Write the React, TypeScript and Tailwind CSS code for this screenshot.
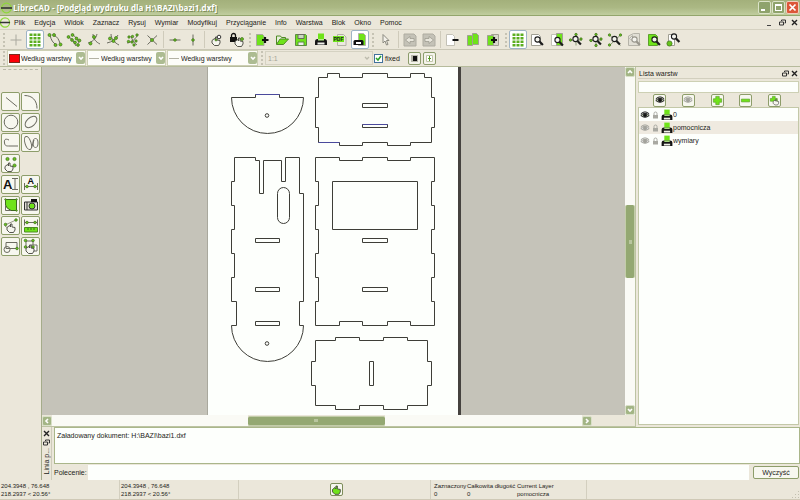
import type {ReactNode} from "react";

type Layer = {name: string; visible: boolean};

const MENUS = ["Plik", "Edycja", "Widok", "Zaznacz", "Rysuj", "Wymiar", "Modyfikuj", "Przyciąganie", "Info", "Warstwa", "Blok", "Okno", "Pomoc"];

const LAYERS: Layer[] = [
  {name: "0", visible: true},
  {name: "pomocnicza", visible: false},
  {name: "wymiary", visible: false},
];

function Icon({children, size = 16}: {children: ReactNode; size?: number}) {
  return (
    <svg width={size} height={size} viewBox="0 0 16 16" fill="none" stroke="#6b6b60" strokeWidth="1" className="shrink-0">
      {children}
    </svg>
  );
}

function Dots({at, r = 1.5}: {at: [number, number][]; r?: number}) {
  return (
    <g fill="#67c41c" stroke="#3d6b1c" strokeWidth="0.7">
      {at.map(([x, y]) => (
        <circle key={`${x}-${y}`} cx={x} cy={y} r={r} />
      ))}
    </g>
  );
}

function Lens({x, y, color = "#1c1c1c"}: {x: number; y: number; color?: string}) {
  return (
    <g stroke={color}>
      <circle cx={x} cy={y} r="2.6" fill="#f4f4ee" strokeWidth="1.1" />
      <path d={`M${x + 2} ${y + 2}l3.4 3.6`} strokeWidth="2.2" />
    </g>
  );
}

function Printer() {
  return (
    <g stroke="none">
      <path d="M5 1.5h6V8H5z" fill="#6fe31a" />
      <path d="M2 9.5Q2 7 4.500 7h7Q14 7 14 9.500V13H2z" fill="#151515" />
      <path d="M5 7h6v1.500H5z" fill="#b8f08c" />
      <path d="M4.500 10.500h7v2h-7z" fill="#f0f0ea" />
    </g>
  );
}

function Hand({x, y, fill = "#f5f5ee"}: {x: number; y: number; fill?: string}) {
  return (
    <path
      transform={`translate(${x} ${y})`}
      d="M0 2.5 2.5.5 3.5 2V-1H5V2l3 .5V5L6.5 7.5h-4L0 5z"
      fill={fill}
      stroke="#44443c"
      strokeWidth="0.9"
    />
  );
}

function GridIcon() {
  return (
    <Icon>
      {[1.5, 5, 8.5, 12].map((y) =>
        [2.5, 6.5, 10.5].map((x) => <path key={`${x}-${y}`} d={`M${x} ${y}h3v2.5h-3z`} fill="#5cae20" stroke="none" />)
      )}
    </Icon>
  );
}

function EyeIcon({on, size = 10}: {on: boolean; size?: number}) {
  return (
    <svg width={size} height={size} viewBox="0 0 10 10" fill="none" stroke={on ? "#222" : "#a3a39c"} className="shrink-0">
      <path d="M.8 5.5Q5 1 9.2 5.5 5 9 .8 5.5z" fill={on ? "#b8c4ac" : "#ddd"} />
      <circle cx="5" cy="5.2" r="1.5" fill={on ? "#111" : "#a3a39c"} />
      <path d="M.8 3.8Q5 0 9.2 3.8" />
    </svg>
  );
}

function ToolButton({label, active, children}: {label: string; active?: boolean; children: ReactNode}) {
  return (
    <button
      type="button"
      aria-label={label}
      className={
        active
          ? "flex h-[19px] w-[18px] shrink-0 items-center justify-center rounded-xs border border-[#9fb4c6] bg-white"
          : "flex h-[19px] w-[18px] shrink-0 items-center justify-center"
      }
    >
      {children}
    </button>
  );
}

function Handle() {
  return (
    <div className="flex w-[7px] shrink-0 justify-center">
      <div className="h-[14px] border-l-2 border-dotted border-[#c6c3b4]" />
    </div>
  );
}

function Separator() {
  return (
    <div className="flex w-[5px] shrink-0 justify-center">
      <div className="h-[17px] w-px bg-[#cfcbbb]" />
    </div>
  );
}

function SnapTools() {
  return (
    <>
      <Handle />
      <div className="flex w-[154px] shrink-0 justify-between">
        <ToolButton label="Krzyżyk">
          <Icon><path d="M8 2.5v11M2.500 8h11" stroke="#a9a89e" /></Icon>
        </ToolButton>
        <ToolButton label="Siatka" active><GridIcon /></ToolButton>
        <ToolButton label="Końce">
          <Icon>
            <path d="M3 3c1 5 3 8 6 9.5M7 3.500c3.500 1 5 4.500 6 8" />
            <Dots at={[[2.5, 3], [7, 3], [8.5, 13], [13.5, 12.5]]} />
          </Icon>
        </ToolButton>
        <ToolButton label="Na elemencie">
          <Icon>
            <path d="M2 5c3 1 5 3 8 9M6 2c4 3 5 5 7 9" />
            <Dots at={[[2.5, 5], [6.5, 3], [6, 8], [9, 10.5], [10.5, 6.5], [13.5, 8.5], [12, 13]]} r={1.4} />
          </Icon>
        </ToolButton>
        <ToolButton label="Środek łuku">
          <Icon>
            <path d="M7 2c0 5 3 8 7 10M2 11c4-1 8-4 9-9" />
            <Dots at={[[8, 5], [4.5, 11.5]]} />
          </Icon>
        </ToolButton>
        <ToolButton label="Środek">
          <Icon>
            <path d="M6 2c0 5 4 9 8 11M2 11c5-1 9-4 11-8" />
            <Dots at={[[5, 6.5], [8.5, 9], [11, 6]]} />
          </Icon>
        </ToolButton>
        <ToolButton label="Odległość">
          <Icon>
            <path d="M2 11c5-1 9-4 11-9M6 4c1 4 3 7 6 9" />
            <Dots at={[[4, 5], [7.5, 4.5], [12, 3], [3.5, 9.5], [7, 10], [11, 9], [9, 13]]} r={1.2} />
          </Icon>
        </ToolButton>
        <ToolButton label="Przecięcie">
          <Icon>
            <path d="M3.5 3.5l9.500 9M13 3.500l-9.500 9" />
            <Dots at={[[8, 8]]} />
          </Icon>
        </ToolButton>
      </div>
      <Separator />
      <div className="flex w-[36px] shrink-0 justify-between">
        <ToolButton label="Poziomo"><Icon><path d="M2.5 8h11" /><Dots at={[[8, 8]]} r={1.3} /></Icon></ToolButton>
        <ToolButton label="Pionowo"><Icon><path d="M8 2.5v11" /><Dots at={[[8, 8]]} r={1.3} /></Icon></ToolButton>
      </div>
      <Separator />
      <div className="flex w-[39px] shrink-0 justify-between">
        <ToolButton label="Ustaw zero">
          <Icon><Hand x={4} y={6} /><circle cx="11" cy="5" r="1.8" fill="#fff" stroke="#333" /><Dots at={[[8, 8]]} r={1} /></Icon>
        </ToolButton>
        <ToolButton label="Zablokuj zero">
          <Icon>
            <path d="M1 5h7v5H1z" fill="#111" stroke="none" />
            <path d="M2.5 5V3.500a2 2 0 0 1 4 0V5" stroke="#111" strokeWidth="1.3" />
            <Hand x={6} y={7} /><Dots at={[[13, 7]]} />
          </Icon>
        </ToolButton>
      </div>
    </>
  );
}

function FileTools() {
  return (
    <>
      <Handle />
      <div className="flex w-[116px] shrink-0 justify-between">
        <ToolButton label="Nowy">
          <Icon>
            <path d="M2.5 2.500h6l1.500 1.500v9.500H2.500z" fill="#6fe31a" stroke="#a9a9a0" />
            <path d="M11 5v6M8 8h6.500" stroke="#111" strokeWidth="2.2" />
          </Icon>
        </ToolButton>
        <ToolButton label="Otwórz">
          <Icon>
            <path d="M2.5 12V4h4l1 1.500h4V7" stroke="#4f8a24" fill="#e8efdc" />
            <path d="M2.5 12.500 6 7h8.500l-5 5.500z" fill="#6fe31a" stroke="#4f8a24" />
          </Icon>
        </ToolButton>
        <ToolButton label="Zapisz">
          <Icon>
            <path d="M2.5 2.500h10l1 1v10h-11z" fill="#6fe31a" stroke="#5d8a42" />
            <path d="M5 2.500h6v4H5z" fill="#c9d8bf" />
            <path d="M5 10h6v3.500H5z" fill="#eee" stroke="#5d8a42" />
          </Icon>
        </ToolButton>
        <ToolButton label="Drukuj"><Icon><Printer /></Icon></ToolButton>
        <ToolButton label="Eksport PDF">
          <Icon>
            <path d="M5.5 2.500h6l2.500 2.500v8.500H5.500z" fill="#ece9df" stroke="#b3b1a6" />
            <path d="M1 4h11v6H1z" fill="#6fe31a" stroke="none" />
            <text x="1.500" y="9" fontSize="5" fontWeight="bold" fill="#222" stroke="none" fontFamily="Liberation Sans, sans-serif">PDF</text>
          </Icon>
        </ToolButton>
        <ToolButton label="Podgląd wydruku" active>
          <Icon>
            <path d="M6.5 1.500h5l2 2v10h-7z" fill="#6fe31a" stroke="#b3b1a6" />
            <path d="M1.5 9.500Q1.500 8 3 8h7q1.500 0 1.500 1.500V13h-10z" fill="#111" stroke="none" />
            <path d="M4 10h5v2H4z" fill="#fff" stroke="none" />
          </Icon>
        </ToolButton>
      </div>
      <Handle />
      <div className="flex w-[20px] shrink-0 justify-center">
        <ToolButton label="Wskaźnik">
          <Icon><path d="M5 2.500v8.500l2-2 1.500 4 1.500-.5-1.500-4H11z" fill="#f3f1ea" stroke="#8b8a80" /></Icon>
        </ToolButton>
      </div>
      <Separator />
      <div className="flex w-[37px] shrink-0 justify-between">
        <ToolButton label="Cofnij">
          <Icon>
            <path d="M2 2h10l2 2v10H2z" fill="#c4c2b7" stroke="#aeaca1" />
            <path d="M3.500 8 8 4.500v2h4v3H8v2z" fill="#e8e6dc" stroke="#97958a" strokeWidth="0.7" />
          </Icon>
        </ToolButton>
        <ToolButton label="Ponów">
          <Icon>
            <path d="M2 2h10l2 2v10H2z" fill="#c4c2b7" stroke="#aeaca1" />
            <path d="M12.500 8 8 4.500v2H4v3h4v2z" fill="#e8e6dc" stroke="#97958a" strokeWidth="0.7" />
          </Icon>
        </ToolButton>
      </div>
      <Separator />
      <div className="flex w-[59px] shrink-0 justify-between">
        <ToolButton label="Wytnij">
          <Icon><path d="M2.500 2.500h6l2 2v9h-8z" fill="#fff" stroke="#c3c1b6" /><path d="M8.500 8h6" stroke="#111" strokeWidth="2" /></Icon>
        </ToolButton>
        <ToolButton label="Kopiuj">
          <Icon><path d="M7.500 1.500h4l2 2v9h-6z" fill="#6fe31a" stroke="#a09f93" /><path d="M2.500 3.500h4l1 1v9h-5z" fill="#6fe31a" stroke="#a09f93" /></Icon>
        </ToolButton>
        <ToolButton label="Wklej">
          <Icon>
            <path d="M6.500 2.500h7v11h-7z" fill="#d9d7cc" stroke="#a09f93" />
            <path d="M2.500 3.500h6v10h-6z" fill="#6fe31a" stroke="#a09f93" />
            <path d="M9 5v6M6 8h6" stroke="#111" strokeWidth="2.2" />
          </Icon>
        </ToolButton>
      </div>
    </>
  );
}

function ZoomTools() {
  return (
    <>
      <Handle />
      <div className="flex w-[173px] shrink-0 justify-between">
        <ToolButton label="Pokaż siatkę" active><GridIcon /></ToolButton>
        <ToolButton label="Odśwież">
          <Icon><path d="M2.500 2.500h7l2 2v9h-9z" fill="#fff" stroke="#a09f93" /><Lens x={8.5} y={7.5} /></Icon>
        </ToolButton>
        <ToolButton label="Powiększ stronę">
          <Icon>
            <path d="M2.500 2.500h5v11h-5z" fill="#fff" stroke="#c3c1b6" />
            <path d="M7.500 1.500h6v12h-6z" fill="#6fe31a" stroke="#a09f93" />
            <Lens x={8.5} y={8} />
          </Icon>
        </ToolButton>
        <ToolButton label="Powiększ">
          <Icon><path d="M1 8h13M8 1.500v12" stroke="#8a9a78" /><Dots at={[[8, 2.5], [2.5, 8], [13, 7]]} r={1.2} /><Lens x={7.5} y={7} /></Icon>
        </ToolButton>
        <ToolButton label="Pomniejsz">
          <Icon><path d="M1 8h13M8 1.500v12" stroke="#8a9a78" /><Dots at={[[8, 2.5], [3, 8.5], [13, 7], [8, 13.5]]} r={1.2} /><Lens x={7.5} y={7} /></Icon>
        </ToolButton>
        <ToolButton label="Automatycznie">
          <Icon><path d="M2 2.500l11.500 11M14 2.500l-11.500 11" stroke="#8a9a78" /><Dots at={[[2.5, 3], [13.5, 3], [2.5, 13]]} r={1.2} /><Lens x={7.5} y={7} /></Icon>
        </ToolButton>
        <ToolButton label="Poprzedni widok">
          <Icon>
            <path d="M2.500 4l5-2.500h6v12h-11z" fill="#e1dfd5" stroke="#b5b3a8" />
            <path d="M3.500 6.500l3-3v5z" fill="#fff" stroke="#b5b3a8" />
            <Lens x={8.5} y={7.5} color="#98968c" />
          </Icon>
        </ToolButton>
        <ToolButton label="Okno">
          <Icon><path d="M2.500 2.500h7l2 2v9h-9z" fill="#6fe31a" stroke="#5da02c" /><Lens x={8.5} y={7.5} /></Icon>
        </ToolButton>
        <ToolButton label="Przesuń">
          <Icon><path d="M3.500 2.500h6v11h-6z" fill="#fff" stroke="#a09f93" /><Dots at={[[4.5, 11.5]]} r={2.6} /><Lens x={9} y={4.5} /></Icon>
        </ToolButton>
      </div>
    </>
  );
}

const DRAW_TOOLS: {label: string; icon: ReactNode}[] = [
  {label: "Linia", icon: <path d="M3 3.500l11 9" />},
  {label: "Łuk", icon: <path d="M1.500 1.500c8 0 12.500 5 12.500 13" />},
  {label: "Okrąg", icon: <circle cx="8" cy="8" r="6.800" />},
  {label: "Elipsa", icon: <ellipse cx="8" cy="8" rx="7" ry="4.200" transform="rotate(-42 8 8)" />},
  {label: "Polilinia", icon: <path d="M6 5C2 3 1 5 1.500 8c.5 3 2 3 4 3h9.500" />},
  {label: "Krzywa", icon: <><ellipse cx="5" cy="8" rx="3" ry="6.800" transform="rotate(-18 5 8)" /><ellipse cx="12.500" cy="8" rx="2.500" ry="4.500" /><path d="M8.500 13l2.500-8" /></>},
  {label: "Punkt", icon: <><Dots at={[[4.5, 3], [11.5, 3], [11.5, 9.5]]} r={1.6} /><Hand x={2} y={8} /></>},
  {label: "", icon: null},
  {
    label: "Tekst",
    icon: (
      <>
        <text x="0" y="13" fontSize="13" fontWeight="bold" fill="#111" stroke="none" fontFamily="Liberation Sans, sans-serif">A</text>
        <path d="M9 2.500h6M12 2.500v11M9 13.500h6" />
      </>
    ),
  },
  {
    label: "Wymiar",
    icon: (
      <>
        <text x="4.500" y="8" fontSize="9" fontWeight="bold" fill="#111" stroke="none" fontFamily="Liberation Sans, sans-serif">A</text>
        <path d="M1.500 7v7M14.500 7v7M2 10.500h12" />
        <Dots at={[[4, 10.5], [12, 10.5]]} r={1.3} />
      </>
    ),
  },
  {label: "Kreskowanie", icon: <><path d="M2.500 2.500h11v11H8Q3 11 2.500 8z" fill="#6fe31a" stroke="#3c6a1c" /><path d="M2.500 8v5.500H8" /><Dots at={[[2.5, 2.5], [13.5, 2.5], [13.5, 13.5]]} r={0.8} /></>},
  {
    label: "Obraz",
    icon: (
      <>
        <path d="M1.500 5h13v8h-13z" fill="#deddd4" stroke="#333" />
        <path d="M8 2h6v3H8z" fill="#111" stroke="none" />
        <path d="M4 5v8" stroke="#333" />
        <circle cx="9" cy="9" r="3" fill="#6fe31a" stroke="#333" />
      </>
    ),
  },
  {label: "Modyfikuj", icon: <><path d="M2 7l11-5M2 8l4 3" stroke="#99998c" /><Dots at={[[2.5, 6.5], [13, 2]]} r={1.3} /><Hand x={4} y={7} /></>},
  {
    label: "Zmierz",
    icon: (
      <>
        <path d="M1.500 1.500v6M14.500 1.500v6M2 4.500h12" />
        <Dots at={[[4, 4.5], [12, 4.5]]} r={1.3} />
        <path d="M1.500 9.500h13v4.500h-13z" fill="#6fe31a" stroke="#4f8a24" />
        <path d="M5 10v2M8 10v2M11 10v2" stroke="#3c6a1c" />
      </>
    ),
  },
  {label: "Blok", icon: <><path d="M3 4.500h11v6H3z" /><circle cx="4" cy="11.500" r="3" /><Dots at={[[14, 10.5]]} r={1.3} /></>},
  {
    label: "Zaznacz",
    icon: (
      <>
        <path d="M3 3h7v7H3z" /><path d="M8 7h6v6H8z" fill="#fff" />
        <Dots at={[[2.5, 2.5], [10, 2.5], [2.5, 9], [10, 9]]} r={1.3} /><Hand x={3} y={8} />
      </>
    ),
  },
];

function LayerCombo({swatch, width}: {swatch: ReactNode; width: string}) {
  return (
    <div className={`flex h-4 shrink-0 items-center border border-[#cdd0b4] bg-[#fdfdf9] pl-px ${width}`}>
      {swatch}
      <select aria-label="Według warstwy" className="h-full min-w-0 flex-1 appearance-none bg-transparent pl-px text-[7px]">
        <option>Według warstwy</option>
      </select>
      <div className="flex h-3 w-[9px] items-center justify-center rounded-xs bg-[#adbc92]">
        <Chevron d="M2 3l2 2 2-2" />
      </div>
    </div>
  );
}

function Chevron({d}: {d: string}) {
  return (
    <svg width="8" height="8" viewBox="0 0 8 8" fill="none" stroke="#fff" strokeWidth="1.6">
      <path d={d} />
    </svg>
  );
}

function ScrollButton({label, d}: {label: string; d: string}) {
  return (
    <button type="button" aria-label={label} className="flex size-[10px] shrink-0 items-center justify-center rounded-xs border border-[#d9e0c8] bg-[#a3b585]">
      <Chevron d={d} />
    </button>
  );
}

function RestoreIcon() {
  return (
    <svg width="7" height="7" viewBox="0 0 7 7" fill="none" stroke="#333">
      <path d="M2.500 2V1h4v3h-1M.5 3h4v3h-4z" />
    </svg>
  );
}

function CloseIcon() {
  return (
    <svg width="7" height="7" viewBox="0 0 7 7" fill="none" stroke="#222" strokeWidth="1.4">
      <path d="M1 1l5 5M6 1L1 6" />
    </svg>
  );
}

function TitleBar() {
  return (
    <header className="flex h-4 shrink-0 items-center border-b border-[#93a56c] bg-linear-to-b from-[#a3b07b] via-[#abb884] to-[#c0cd9e] pr-px pl-px">
      <svg width="12" height="12" viewBox="0 0 12 12" fill="none">
        <circle cx="5.500" cy="6" r="4.800" stroke="#8ed83a" strokeWidth="1.200" />
        <path d="M0 6h11" stroke="#333" strokeWidth="1.600" />
      </svg>
      <h1 className="flex-1 font-['Open_Sans',sans-serif] text-[8px] leading-3 font-bold whitespace-nowrap text-white [text-shadow:1px_1px_0_#7e8d57]">
        LibreCAD - [Podgląd wydruku dla H:\BAZI\bazi1.dxf]
      </h1>
      <div className="flex gap-px">
        <button type="button" aria-label="Minimalizuj" className="flex size-[13px] items-end rounded-xs border border-[#dbe3c8] bg-[#8fa36c] p-0.5">
          <span className="h-0.5 w-1 bg-white" />
        </button>
        <button type="button" aria-label="Przywróć" className="size-[13px] rounded-xs border border-[#dbe3c8] bg-[#8fa36c] p-0.5">
          <span className="block size-[7px] border border-t-2 border-white" />
        </button>
        <button type="button" aria-label="Zamknij" className="flex size-[13px] items-center justify-center rounded-xs border border-[#f1cdbd] bg-[#dc5638]">
          <svg width="9" height="9" viewBox="0 0 9 9" stroke="#fff" strokeWidth="1.7">
            <path d="M1.500 1.500l6 6M7.500 1.500l-6 6" />
          </svg>
        </button>
      </div>
    </header>
  );
}

function MenuBar() {
  return (
    <nav className="flex h-[13px] shrink-0 items-center">
      <svg width="14" height="11" viewBox="0 0 14 11" fill="none">
        <circle cx="5" cy="5.500" r="4.600" stroke="#8ed83a" strokeWidth="1.200" />
        <path d="M0 5.500h10" stroke="#333" strokeWidth="1.500" />
      </svg>
      <ul className="flex flex-1 gap-[9px]">
        {MENUS.map((menu) => (
          <li key={menu}>
            <button type="button" className="block">{menu}</button>
          </li>
        ))}
      </ul>
      <div className="flex gap-[5px] pr-0.5">
        <button type="button" aria-label="Minimalizuj dokument" className="flex size-[7px] items-end"><span className="h-px w-1 bg-[#444]" /></button>
        <button type="button" aria-label="Przywróć dokument"><RestoreIcon /></button>
        <button type="button" aria-label="Zamknij dokument"><CloseIcon /></button>
      </div>
    </nav>
  );
}

function OptionsBar() {
  return (
    <div className="flex h-[17px] shrink-0 items-center border-t border-[#c9c6b5]">
      <Handle />
      <div className="flex gap-px">
        <LayerCombo width="w-[79px]" swatch={<span className="h-[9px] w-[11px] border border-[#7b2a1c] bg-[#fb0007]" />} />
        <LayerCombo width="w-[79px]" swatch={<span className="mr-px h-px w-[10px] bg-[#b3b2a4]" />} />
        <LayerCombo width="w-[91px]" swatch={<span className="mr-px h-px w-[10px] bg-[#b3b2a4]" />} />
      </div>
      <Handle />
      <div className="flex h-[14px] w-[108px] items-center border border-[#d5d2c2] pr-0.5">
        <select aria-label="Skala" disabled className="h-full flex-1 appearance-none pl-0.5 text-[#a5a396]">
          <option>1:1</option>
        </select>
        <svg width="6" height="6" viewBox="0 0 6 6" fill="none" stroke="#bdbbad" strokeWidth="1.3"><path d="M1 2l2 2 2-2" /></svg>
      </div>
      <label className="flex items-center gap-0.5 pl-px">
        <span className="grid size-[9px] place-items-center">
          <input type="checkbox" defaultChecked className="peer col-start-1 row-start-1 size-[9px] appearance-none border border-[#41719c] bg-white" />
          <svg width="7" height="7" viewBox="0 0 7 7" fill="none" stroke="#2aa32a" strokeWidth="1.5" className="pointer-events-none invisible col-start-1 row-start-1 peer-checked:visible">
            <path d="M1 3l2 2 3-4" />
          </svg>
        </span>
        fixed
      </label>
      <div className="flex gap-0.5 pl-2">
        <button type="button" aria-label="Czarno-biały" className="flex size-[13px] items-center justify-center rounded-xs border border-[#8c9c6c] bg-[#f4f3ea]">
          <svg width="9" height="9" viewBox="0 0 9 9"><path d="M1 1h7v7H1z" fill="#b6b6aa" /><path d="M3 2h4v5H3z" fill="#111" /></svg>
        </button>
        <button type="button" aria-label="Wyśrodkuj na stronie" className="flex size-[13px] items-center justify-center rounded-xs border border-[#8c9c6c] bg-[#f4f3ea]">
          <svg width="9" height="9" viewBox="0 0 9 9" fill="none"><path d="M1.500 1.500h6v6h-6z" fill="#fff" stroke="#c0c4a8" /><path d="M4.500 2v5M3 4.500h3" stroke="#5a9a28" /></svg>
        </button>
      </div>
    </div>
  );
}

function ToolPalette() {
  return (
    <aside className="w-[42px] shrink-0 border-r border-[#a5ac8a] pt-0.5">
      <div className="mx-[3px] border-t border-dashed border-[#bab8a9]" />
      <div className="mt-[22px] grid h-[164px] grid-cols-[19px_19px] content-between gap-x-px pl-px">
        {DRAW_TOOLS.map((tool) =>
          tool.icon ? (
            <button
              key={tool.label}
              type="button"
              aria-label={tool.label}
              className="flex size-[19px] items-center justify-center rounded-xs border border-[#8d9d6a] bg-[#f7f7ef]"
            >
              <Icon>{tool.icon}</Icon>
            </button>
          ) : (
            <span key="empty" />
          )
        )}
      </div>
    </aside>
  );
}

function CutSheet() {
  return (
    <svg width="250" height="348" viewBox="208 67 250 348" fill="none" stroke="#3e3e38">
      {/* Half-round bracket */}
      <path d="M231.500 97.500H255.500V94.500H279.500V97.500H303.500A36 36 0 0 1 231.500 97.500z" />
      <circle cx="267" cy="115.500" r="1.800" />
      {/* Top panel */}
      <path d="M318.500 77.500H327.500V73.500H339.500V77.500H362.500V73.500H387.500V77.500H410.500V73.500H424.500V77.500H431.500V97.500H434.500V127.500H431.500V142.500H410.500V145.500H387.500V142.500H362.500V145.500H339.500V142.500H318.500V127.500H315.500V97.500H318.500z" />
      <path d="M362.500 103.500h25v4h-25zM362.500 124.500h25v3h-25z" />
      {/* Side panel with rounded end */}
      <path d="M234.500 157.500H255.500V160.500H259.500V193.500H263.500V160.500H281.500V181.500H285.500V157.500H299.500V193.500H303.500V301.500H299.500V325.500H303.500A36 36 0 0 1 231.500 325.500H236.500V301.500H231.500V277.500H234.500V253.500H231.500V229.500H234.500V205.500H231.500V181.500H234.500z" />
      <path d="M255.500 238.500h24v4h-24zM255.500 287.500h24v4h-24zM255.500 321.500h24v4h-24z" />
      <rect x="277.500" y="187.500" width="12" height="36" rx="6" />
      <circle cx="267" cy="343.500" r="1.800" />
      {/* Front panel */}
      <path d="M315.500 157.500H339.500V160.500H362.500V157.500H387.500V160.500H410.500V157.500H434.500V181.500H431.500V205.500H434.500V229.500H431.500V253.500H434.500V277.500H431.500V301.500H434.500V325.500H410.500V321.500H387.500V325.500H362.500V321.500H339.500V325.500H315.500V301.500H318.500V277.500H315.500V253.500H318.500V229.500H315.500V205.500H318.500V181.500H315.500z" />
      <path d="M332.500 181.500h85v48h-85zM362.500 238.500h25v4h-25zM362.500 287.500h25v4h-25z" />
      {/* Bottom panel */}
      <path d="M315.500 340.500H335.500V337.500H359.500V340.500H383.500V337.500H407.500V340.500H427.500V361.500H431.500V385.500H427.500V405.500H407.500V409.500H383.500V405.500H359.500V409.500H335.500V405.500H315.500V385.500H311.500V361.500H315.500z" />
      <path d="M369.500 361.500h4v24h-4z" />
      <path d="M255.500 94.500h24M362.500 124.500h25M318.500 142.500h21" stroke="#4a4a9c" />
    </svg>
  );
}

function DrawingArea() {
  return (
    <main className="flex min-w-0 flex-1 flex-col border-r border-b border-[#bcc3a2]">
      <div className="flex min-h-0 flex-1">
        <div className="flex flex-1 justify-center overflow-hidden bg-[#c5c3b9]">
          <div className="flex shrink-0 border-r-[3px] border-l border-r-[#45423f] border-l-[#a9a89d] bg-[#fdfffc]">
            <CutSheet />
          </div>
        </div>
        <div className="flex w-[10px] shrink-0 flex-col bg-[#fafaf5]">
          <ScrollButton label="W górę" d="M2 5l2-2 2 2" />
          <div className="flex-[128]" />
          <div className="flex flex-[74] items-center justify-center rounded-xs border-x border-[#c3cda9] bg-[#94a872]">
            <span className="h-1 w-[3px] bg-[#b9c69f]" />
          </div>
          <div className="flex-[127]" />
          <ScrollButton label="W dół" d="M2 3l2 2 2-2" />
        </div>
      </div>
      <div className="flex h-[11px] shrink-0 items-center pr-[43px]">
        <ScrollButton label="W lewo" d="M5 2L3 4l2 2" />
        <div className="h-full flex-[196] bg-[#fafaf5]" />
        <div className="flex h-[10px] flex-[138] items-center justify-center rounded-xs border-y border-[#c3cda9] bg-[#94a872]">
          <span className="h-[3px] w-1 bg-[#b9c69f]" />
        </div>
        <div className="h-full flex-[197] bg-[#fafaf5]" />
        <ScrollButton label="W prawo" d="M3 2l2 2-2 2" />
      </div>
    </main>
  );
}

function LayerPanel() {
  const button = "flex size-[13px] items-center justify-center rounded-xs border border-[#8d9d6a] bg-[#f7f7ef]";
  return (
    <aside className="flex w-[162px] shrink-0 flex-col pt-px pr-px pb-0.5">
      <div className="flex h-[11px] items-center gap-0.5 border-b border-[#d2cfbe] px-px">
        <h2 className="flex-1">Lista warstw</h2>
        <button type="button" aria-label="Odczep panel"><RestoreIcon /></button>
        <button type="button" aria-label="Zamknij panel"><CloseIcon /></button>
      </div>
      <input aria-label="Filtr warstw" className="mt-0.5 h-3 w-full border border-[#cdd0b4] bg-[#fdfffc] px-1" />
      <div className="flex h-[14px] items-center justify-between pr-[18px] pl-[15px]">
        <button type="button" aria-label="Pokaż wszystkie" className={button}><EyeIcon on /></button>
        <button type="button" aria-label="Ukryj wszystkie" className={button}><EyeIcon on={false} /></button>
        <button type="button" aria-label="Dodaj warstwę" className={button}>
          <Icon size={11}><path d="M5.500 2h5v3.500H14v5h-3.500V14h-5v-3.500H2v-5h3.500z" fill="#6fe31a" stroke="#5da02c" /></Icon>
        </button>
        <button type="button" aria-label="Usuń warstwę" className={button}>
          <Icon size={11}><path d="M2 6h12v4H2z" fill="#6fe31a" stroke="#5da02c" /></Icon>
        </button>
        <button type="button" aria-label="Edytuj warstwę" className={button}>
          <Icon size={11}><path d="M5 2h4v3h3v4H2V5h3z" fill="#6fe31a" stroke="#5da02c" /><Hand x={6} y={7} /></Icon>
        </button>
      </div>
      <ul className="min-h-0 flex-1 border border-[#c3c8a8] bg-[#fdfffc]">
        {LAYERS.map((layer, i) => (
          <li key={layer.name} className={i === 1 ? "flex h-[13px] items-center bg-[#efeae0] pl-px" : "flex h-[13px] items-center pl-px"}>
            <EyeIcon on={layer.visible} />
            <svg width="11" height="8" viewBox="0 0 11 8" fill="none">
              <path d="M3 4h5v3.500H3z" fill="#a9a9a2" />
              <path d="M4 4V2.500a1.500 1.500 0 0 1 3 0V4" stroke="#a9a9a2" />
            </svg>
            <Icon size={12}><g transform="translate(-1.600 -1) scale(1.200)"><Printer /></g></Icon>
            <span>{layer.name}</span>
          </li>
        ))}
      </ul>
    </aside>
  );
}

function CommandDock() {
  return (
    <section className="flex h-[53px] shrink-0">
      <div className="flex w-[10px] shrink-0 flex-col items-center gap-0.5 border-r border-[#cfccbb] pt-[3px]">
        <button type="button" aria-label="Zamknij wiersz poleceń"><CloseIcon /></button>
        <button type="button" aria-label="Odczep wiersz poleceń"><RestoreIcon /></button>
        <h2 className="rotate-180 leading-[9px] whitespace-nowrap [writing-mode:vertical-rl]">Linia p...</h2>
      </div>
      <div className="flex min-w-0 flex-1 flex-col pl-0.5">
        <div className="flex-1 border border-[#aab68a] bg-[#fdfffc] px-0.5 pt-[3px]" role="log">
          Załadowany dokument: H:\BAZI\bazi1.dxf
        </div>
        <form className="flex h-4 items-center pr-px">
          <label htmlFor="command" className="w-[34px]">Polecenie:</label>
          <input id="command" className="h-[15px] min-w-0 flex-1 bg-[#fdfffc] px-1" />
          <button type="button" className="ml-1 h-[13px] w-[46px] rounded-xs border border-[#8d9d6a] bg-[#f7f7ef]">Wyczyść</button>
        </form>
      </div>
    </section>
  );
}

function StatusBar() {
  return (
    <footer className="flex h-5 shrink-0 items-stretch border-b border-[#cfc9b6] text-[6px] leading-[8px]">
      <div className="w-[119px] pt-0.5 pl-px">
        <p>204.3948 , 76.648</p>
        <p>218.2937 &lt; 20.56°</p>
      </div>
      <div className="w-[119px] border-l border-[#d3cfbf] pt-0.5 pl-px">
        <p>204.3948 , 76.648</p>
        <p>218.2937 &lt; 20.56°</p>
      </div>
      <div className="flex w-[192px] items-center justify-center border-l border-[#d3cfbf] pl-1">
        <button type="button" aria-label="Zaznacz" className="flex size-[13px] items-center justify-center rounded-xs border border-[#7d8d5a] bg-[#f7f7ef]">
          <Icon size={12}><g transform="translate(2 4) scale(1.300)"><Hand x={0} y={0} fill="#6fe31a" /></g></Icon>
        </button>
      </div>
      <dl className="flex w-[157px] gap-0.5 border-x border-[#d3cfbf] pt-0.5 pl-[3px] whitespace-nowrap">
        <div className="w-[31px]"><dt>Zaznaczony</dt><dd>0</dd></div>
        <div className="w-[48px]"><dt>Całkowita długość</dt><dd>0</dd></div>
        <div><dt>Current Layer</dt><dd>pomocnicza</dd></div>
      </dl>
      <div className="flex flex-1 items-end justify-end">
        <svg width="8" height="8" viewBox="0 0 8 8" fill="#c3c0b0">
          <path d="M6 0h1v1H6zM3 3h1v1H3zM6 3h1v1H6zM0 6h1v1H0zM3 6h1v1H3zM6 6h1v1H6z" />
        </svg>
      </div>
    </footer>
  );
}

export default function App() {
  return (
    <div className="flex h-screen w-full flex-col overflow-hidden bg-[#ebe7da] font-['Liberation_Sans',sans-serif] text-[7px] leading-[9px] text-[#1c1c18]">
      <TitleBar />
      <MenuBar />
      <div className="flex h-5 shrink-0 items-center border-t border-[#d5d1c1]">
        <SnapTools />
        <FileTools />
        <ZoomTools />
      </div>
      <OptionsBar />
      <div className="flex min-h-0 flex-1 border-t border-[#b6bb9c]">
        <ToolPalette />
        <div className="flex min-w-0 flex-1 flex-col">
          <div className="flex min-h-0 flex-1 gap-0.5">
            <DrawingArea />
            <LayerPanel />
          </div>
          <CommandDock />
        </div>
      </div>
      <StatusBar />
    </div>
  );
}
